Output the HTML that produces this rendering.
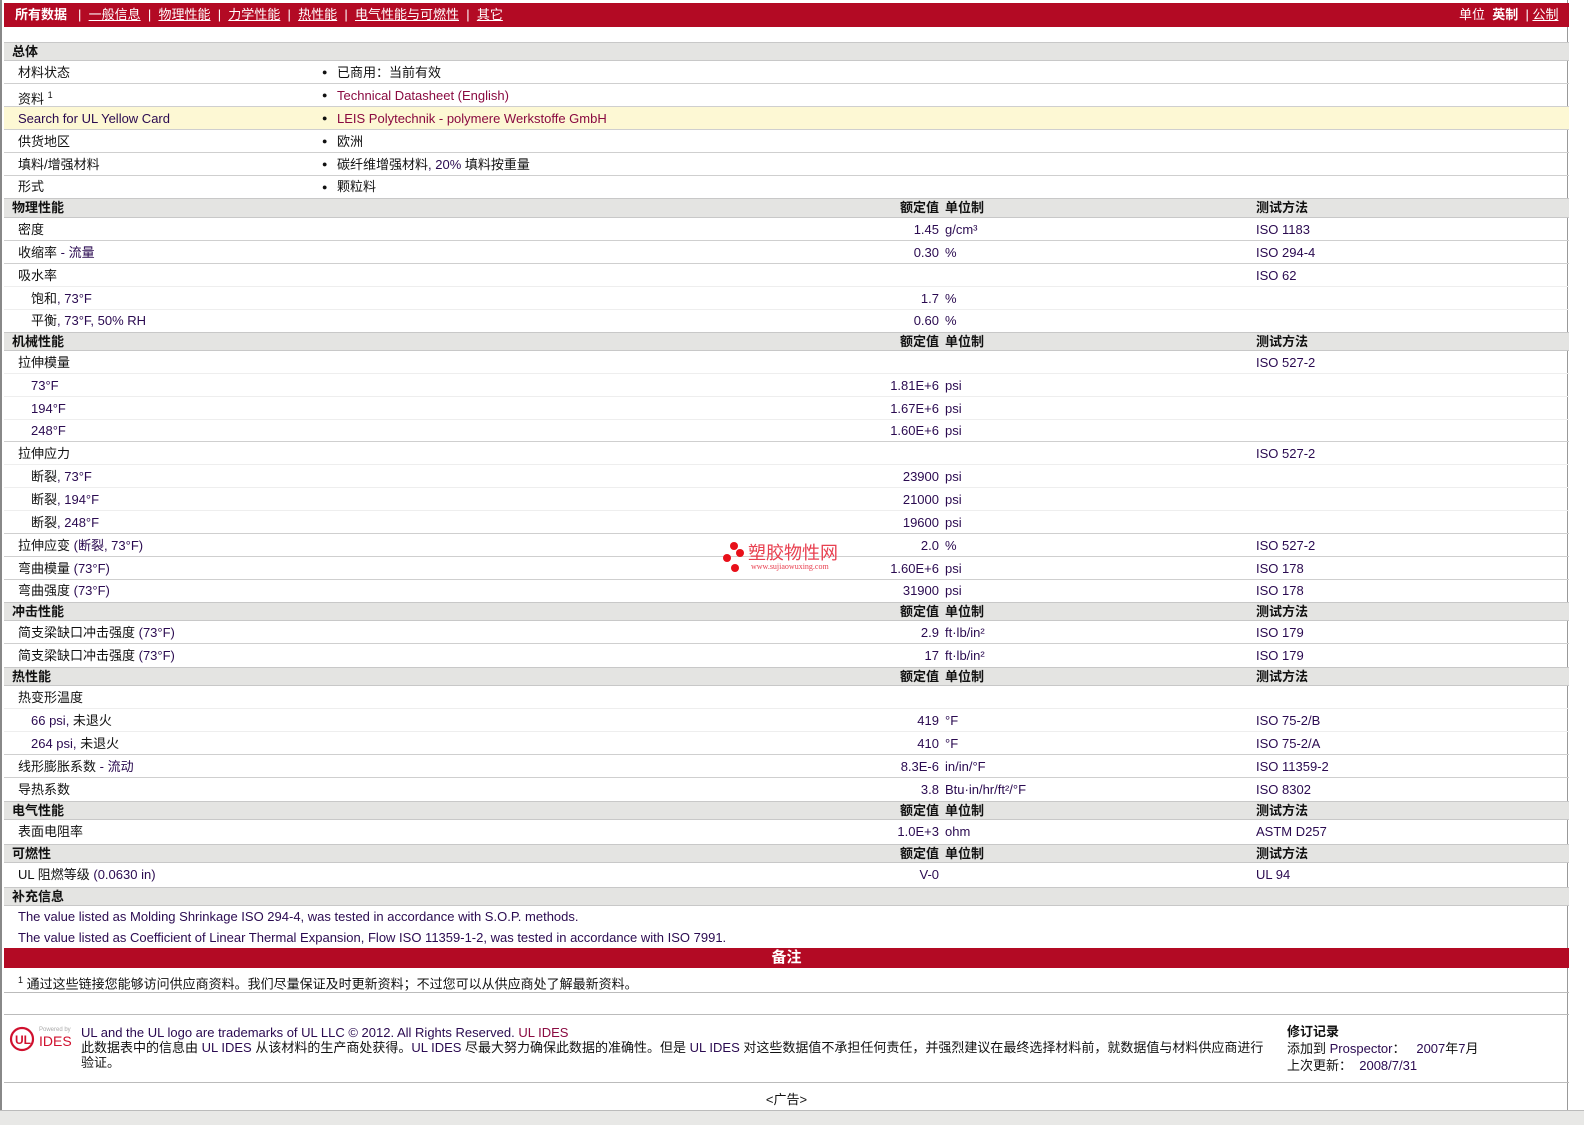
<!DOCTYPE html>
<html><head><meta charset="utf-8">
<style>
*{margin:0;padding:0;box-sizing:border-box}
body{width:1584px;height:1125px;background:#fff;position:relative;overflow:hidden;font-family:"Liberation Sans","Noto Sans CJK SC",sans-serif;font-size:13px;color:#111}
#f{position:absolute;left:0;top:0;width:1568px;height:1112px;border-left:2px solid #888;border-right:1px solid #999;background:#fff}
.x{position:absolute;left:2px;width:1565px}
.h{background:#e4e4e2;border-top:1px solid #c8c8c8;border-bottom:1px solid #c8c8c8;font-weight:bold;line-height:18px}
.r{border-bottom:1px solid #cfcfcf}
.x > span{position:absolute;white-space:nowrap}
.l{left:14px}.s{left:27px}.hl{left:8px}
.b{left:318px;font-size:9px}.bt{left:333px}
.v{left:780px;width:155px;text-align:right}
.u{left:941px}
.m{left:1252px}
.hv{left:780px;width:155px;text-align:right}
.hu{left:941px}
.hm{left:1252px}
.p{color:#2a0a50}
.lk{color:#8a0a40}
.red{background:#b30a24;color:#fff}
</style></head><body>
<div id="f">
<div class="x red" style="top:3px;height:24px;line-height:24px;font-size:13px">
<span style="left:11px;font-weight:bold">所有数据</span>
<span style="left:74px">|&nbsp; <u>一般信息</u> &nbsp;| &nbsp;<u>物理性能</u> &nbsp;| &nbsp;<u>力学性能</u> &nbsp;| &nbsp;<u>热性能</u> &nbsp;| &nbsp;<u>电气性能与可燃性</u> &nbsp;| &nbsp;<u>其它</u></span>
<span style="left:1455px">单位 &nbsp;<b>英制</b> &nbsp;| <u>公制</u></span>
</div>

<div class="x h" style="top:42px;height:19px"><span class="hl">总体</span></div>
<div class="x r" style="top:61px;height:23px;line-height:23px"><span class="l">材料状态</span><span class="b">●</span><span class="bt">已商用：当前有效</span></div>
<div class="x r" style="top:84px;height:23px;line-height:23px"><span class="l">资料 <sup style="font-size:9px">1</sup></span><span class="b">●</span><span class="bt lk">Technical Datasheet (English)</span></div>
<div class="x r" style="top:107px;height:23px;line-height:23px;background:#fdf8d4"><span class="l p">Search for UL Yellow Card</span><span class="b">●</span><span class="bt lk">LEIS Polytechnik - polymere Werkstoffe GmbH</span></div>
<div class="x r" style="top:130px;height:23px;line-height:23px"><span class="l">供货地区</span><span class="b">●</span><span class="bt">欧洲</span></div>
<div class="x r" style="top:153px;height:23px;line-height:23px"><span class="l">填料/增强材料</span><span class="b">●</span><span class="bt">碳纤维增强材料<span class="p">, 20%</span> 填料按重量</span></div>
<div class="x" style="top:176px;height:22px;line-height:22px"><span class="l">形式</span><span class="b">●</span><span class="bt">颗粒料</span></div>

<div class="x h" style="top:198px;height:20px"><span class="hl">物理性能</span><span class="hv">额定值</span><span class="hu">单位制</span><span class="hm">测试方法</span></div>
<div class="x r" style="top:218px;height:23px;line-height:23px"><span class="l">密度</span><span class="v p">1.45</span><span class="u p">g/cm³</span><span class="m p">ISO 1183</span></div>
<div class="x r" style="top:241px;height:23px;line-height:23px"><span class="l">收缩率 <span class="p">- 流量</span></span><span class="v p">0.30</span><span class="u p">%</span><span class="m p">ISO 294-4</span></div>
<div class="x r" style="top:264px;height:23px;line-height:23px;border-color:#eee"><span class="l">吸水率</span><span class="m p">ISO 62</span></div>
<div class="x r" style="top:287px;height:23px;line-height:23px;border-color:#eee"><span class="s">饱和<span class="p">, 73°F</span></span><span class="v p">1.7</span><span class="u p">%</span></div>
<div class="x" style="top:310px;height:22px;line-height:22px"><span class="s">平衡<span class="p">, 73°F, 50% RH</span></span><span class="v p">0.60</span><span class="u p">%</span></div>

<div class="x h" style="top:332px;height:19px"><span class="hl">机械性能</span><span class="hv">额定值</span><span class="hu">单位制</span><span class="hm">测试方法</span></div>
<div class="x r" style="top:351px;height:23px;line-height:23px;border-color:#eee"><span class="l">拉伸模量</span><span class="m p">ISO 527-2</span></div>
<div class="x r" style="top:374px;height:23px;line-height:23px;border-color:#eee"><span class="s p">73°F</span><span class="v p">1.81E+6</span><span class="u p">psi</span></div>
<div class="x r" style="top:397px;height:23px;line-height:23px;border-color:#eee"><span class="s p">194°F</span><span class="v p">1.67E+6</span><span class="u p">psi</span></div>
<div class="x r" style="top:420px;height:22px;line-height:22px"><span class="s p">248°F</span><span class="v p">1.60E+6</span><span class="u p">psi</span></div>
<div class="x r" style="top:442px;height:23px;line-height:23px;border-color:#eee"><span class="l">拉伸应力</span><span class="m p">ISO 527-2</span></div>
<div class="x r" style="top:465px;height:23px;line-height:23px;border-color:#eee"><span class="s">断裂<span class="p">, 73°F</span></span><span class="v p">23900</span><span class="u p">psi</span></div>
<div class="x r" style="top:488px;height:23px;line-height:23px;border-color:#eee"><span class="s">断裂<span class="p">, 194°F</span></span><span class="v p">21000</span><span class="u p">psi</span></div>
<div class="x r" style="top:511px;height:23px;line-height:23px"><span class="s">断裂<span class="p">, 248°F</span></span><span class="v p">19600</span><span class="u p">psi</span></div>
<div class="x r" style="top:534px;height:23px;line-height:23px"><span class="l">拉伸应变 <span class="p">(断裂, 73°F)</span></span><span class="v p">2.0</span><span class="u p">%</span><span class="m p">ISO 527-2</span></div>
<div class="x r" style="top:557px;height:23px;line-height:23px"><span class="l">弯曲模量 <span class="p">(73°F)</span></span><span class="v p">1.60E+6</span><span class="u p">psi</span><span class="m p">ISO 178</span></div>
<div class="x" style="top:580px;height:22px;line-height:22px"><span class="l">弯曲强度 <span class="p">(73°F)</span></span><span class="v p">31900</span><span class="u p">psi</span><span class="m p">ISO 178</span></div>

<div class="x h" style="top:602px;height:19px"><span class="hl">冲击性能</span><span class="hv">额定值</span><span class="hu">单位制</span><span class="hm">测试方法</span></div>
<div class="x r" style="top:621px;height:23px;line-height:23px"><span class="l">简支梁缺口冲击强度 <span class="p">(73°F)</span></span><span class="v p">2.9</span><span class="u p">ft·lb/in²</span><span class="m p">ISO 179</span></div>
<div class="x" style="top:644px;height:23px;line-height:23px"><span class="l">简支梁缺口冲击强度 <span class="p">(73°F)</span></span><span class="v p">17</span><span class="u p">ft·lb/in²</span><span class="m p">ISO 179</span></div>

<div class="x h" style="top:667px;height:19px"><span class="hl">热性能</span><span class="hv">额定值</span><span class="hu">单位制</span><span class="hm">测试方法</span></div>
<div class="x r" style="top:686px;height:23px;line-height:23px;border-color:#eee"><span class="l">热变形温度</span></div>
<div class="x r" style="top:709px;height:23px;line-height:23px;border-color:#eee"><span class="s"><span class="p">66 psi,</span> 未退火</span><span class="v p">419</span><span class="u p">°F</span><span class="m p">ISO 75-2/B</span></div>
<div class="x r" style="top:732px;height:23px;line-height:23px"><span class="s"><span class="p">264 psi,</span> 未退火</span><span class="v p">410</span><span class="u p">°F</span><span class="m p">ISO 75-2/A</span></div>
<div class="x r" style="top:755px;height:23px;line-height:23px"><span class="l">线形膨胀系数 <span class="p">- 流动</span></span><span class="v p">8.3E-6</span><span class="u p">in/in/°F</span><span class="m p">ISO 11359-2</span></div>
<div class="x" style="top:778px;height:23px;line-height:23px"><span class="l">导热系数</span><span class="v p">3.8</span><span class="u p">Btu·in/hr/ft²/°F</span><span class="m p">ISO 8302</span></div>

<div class="x h" style="top:801px;height:19px"><span class="hl">电气性能</span><span class="hv">额定值</span><span class="hu">单位制</span><span class="hm">测试方法</span></div>
<div class="x" style="top:820px;height:24px;line-height:24px"><span class="l">表面电阻率</span><span class="v p">1.0E+3</span><span class="u p">ohm</span><span class="m p">ASTM D257</span></div>

<div class="x h" style="top:844px;height:19px"><span class="hl">可燃性</span><span class="hv">额定值</span><span class="hu">单位制</span><span class="hm">测试方法</span></div>
<div class="x" style="top:863px;height:24px;line-height:24px"><span class="l">UL 阻燃等级 <span class="p">(0.0630 in)</span></span><span class="v p">V-0</span><span class="m p">UL 94</span></div>

<div class="x h" style="top:887px;height:19px"><span class="hl">补充信息</span></div>
<div class="x" style="top:907px;height:20px;line-height:20px"><span class="l p">The value listed as Molding Shrinkage ISO 294-4, was tested in accordance with S.O.P. methods.</span></div>
<div class="x" style="top:927px;height:21px;line-height:21px"><span class="l p">The value listed as Coefficient of Linear Thermal Expansion, Flow ISO 11359-1-2, was tested in accordance with ISO 7991.</span></div>

<div class="x red" style="top:948px;height:20px;line-height:20px;text-align:center;font-size:15px;font-weight:bold">备注</div>
<div class="x r" style="top:968px;height:25px;line-height:25px;border-color:#bbb"><span class="l"><sup style="font-size:9px">1</sup> 通过这些链接您能够访问供应商资料。我们尽量保证及时更新资料；不过您可以从供应商处了解最新资料。</span></div>
<div class="x r" style="top:993px;height:22px;border-color:#bbb"></div>

<div class="x r" style="top:1015px;height:68px;border-color:#bbb">
 <svg style="position:absolute;left:4px;top:9px" width="70" height="30" viewBox="0 0 70 30">
  <circle cx="14" cy="15" r="11" fill="none" stroke="#d0102e" stroke-width="2.2"/>
  <text x="7" y="20" font-family="Liberation Sans" font-size="12" font-weight="bold" fill="#d0102e">UL</text>
  <text x="31" y="7" font-family="Liberation Sans" font-size="6" fill="#aaa">Powered by</text>
  <text x="31" y="22" font-family="Liberation Sans" font-size="14" fill="#d0102e">IDES</text>
 </svg>
 <div style="position:absolute;left:77px;top:10px;line-height:15px;width:1190px">
  <span class="p">UL and the UL logo are trademarks of UL LLC © 2012. All Rights Reserved. <span class="lk">UL IDES</span></span><br>
  此数据表中的信息由 <span class="p">UL IDES</span> 从该材料的生产商处获得。<span class="p">UL IDES</span> 尽最大努力确保此数据的准确性。但是 <span class="p">UL IDES</span> 对这些数据值不承担任何责任，并强烈建议在最终选择材料前，就数据值与材料供应商进行验证。
 </div>
 <div style="position:absolute;left:1283px;top:8px;line-height:17px">
  <b>修订记录</b><br>添加到 <span class="p">Prospector</span>： &nbsp;&nbsp;<span class="p">2007</span>年<span class="p">7</span>月<br>上次更新： &nbsp;<span class="p">2008/7/31</span>
 </div>
</div>
<div class="x" style="top:1090px;height:20px;line-height:20px;text-align:center">&lt;广告&gt;</div>
</div>
<div style="position:absolute;left:0;top:1110px;width:1584px;height:15px;background:#e8e8e6;border-top:1px solid #bbb"></div>

<div style="position:absolute;left:720px;top:540px;width:140px;height:36px">
 <svg width="30" height="36" style="position:absolute;left:0;top:0">
  <circle cx="14" cy="6" r="4" fill="#e8101a"/><circle cx="20" cy="13" r="4" fill="#e8101a"/>
  <circle cx="7" cy="18" r="4" fill="#e8101a"/><circle cx="15" cy="28" r="4" fill="#e8101a"/>
 </svg>
 <span style="position:absolute;left:28px;top:2px;font-size:18px;color:#e84050;font-family:'Noto Sans CJK SC',sans-serif;line-height:20px">塑胶物性网</span>
 <span style="position:absolute;left:31px;top:22px;font-size:8px;color:#e84050;font-family:'Liberation Serif',serif">www.sujiaowuxing.com</span>
</div>
</body></html>
